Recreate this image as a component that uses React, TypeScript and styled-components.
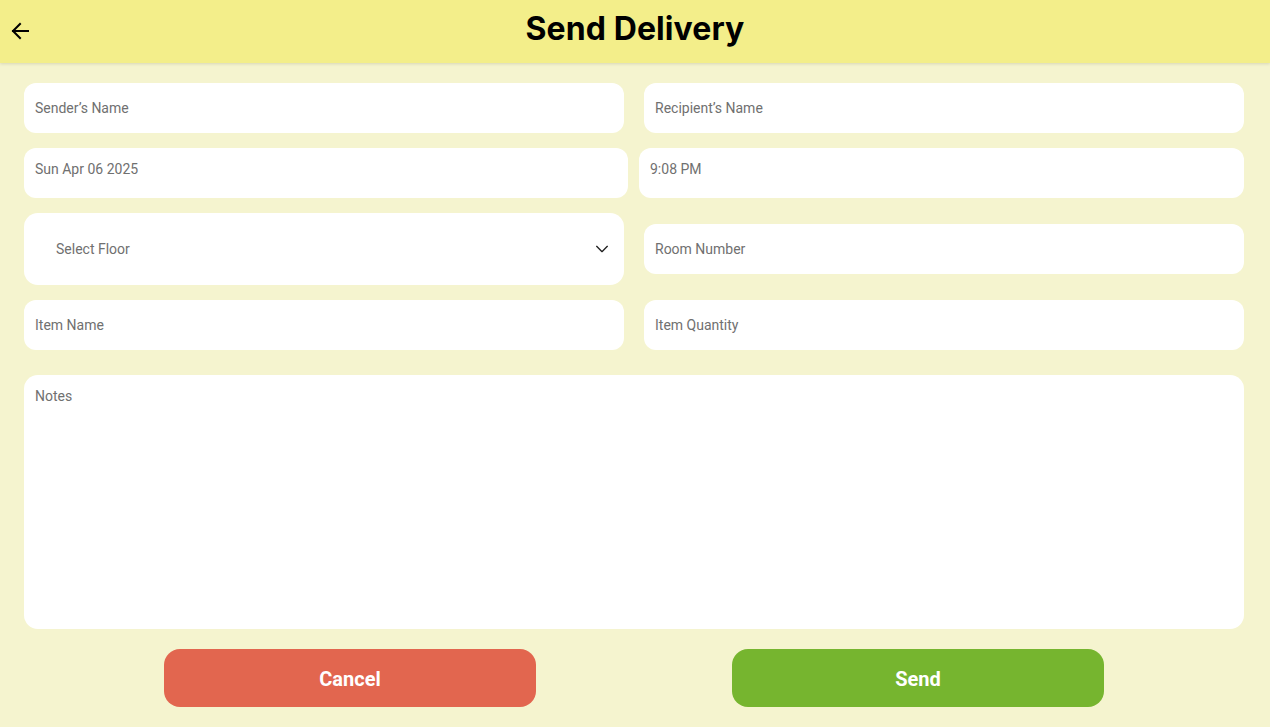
import React from "react";
import styled, { createGlobalStyle } from "styled-components";

const Global = createGlobalStyle`
  html, body { margin: 0; padding: 0; }
  body {
    background: #f5f4cf;
    font-family: Roboto, "Liberation Sans", sans-serif;
  }
  * { box-sizing: border-box; }
`;

const Page = styled.div`
  width: 1270px;
  height: 727px;
  background: #f5f4cf;
  display: flex;
  flex-direction: column;
  overflow: hidden;
`;

const Header = styled.header`
  height: 63px;
  background: #f3ee8a;
  box-shadow: 0 1px 3px rgba(0, 0, 0, 0.12);
  display: flex;
  align-items: center;
  justify-content: center;
  position: relative;
  flex-shrink: 0;
  z-index: 1;
`;

const BackButton = styled.button`
  position: absolute;
  left: 8px;
  top: 19px;
  width: 24px;
  height: 24px;
  padding: 0;
  border: none;
  background: transparent;
  display: flex;
  align-items: center;
  justify-content: center;
  color: #000;
`;

const Title = styled.h1`
  margin: 0;
  font-family: Inter, "Open Sans", sans-serif;
  font-weight: 700;
  font-size: 32px;
  color: #000;
  letter-spacing: 0.1px;
  transform: translateY(-3px);
`;

const Form = styled.main`
  flex: 1;
  padding: 20px 26px 20px 24px;
  display: flex;
  flex-direction: column;
`;

const Row = styled.div<{ $cols: string; $gap: number; $mb: number }>`
  display: grid;
  grid-template-columns: ${(p) => p.$cols};
  align-items: center;
  column-gap: ${(p) => p.$gap}px;
  margin-bottom: ${(p) => p.$mb}px;
`;

const TextInput = styled.input`
  width: 100%;
  min-width: 0;
  height: 50px;
  border: none;
  outline: none;
  border-radius: 12px;
  background: #fff;
  padding: 0 11px;
  font-family: Roboto, "Liberation Sans", sans-serif;
  font-size: 14px;
  color: #707070;
  &::placeholder { color: #707070; }
`;

const PickerField = styled.div`
  min-width: 0;
  height: 50px;
  border-radius: 12px;
  background: #fff;
  padding: 13px 11px 0;
  font-size: 14px;
  line-height: 16px;
  color: #707070;
`;

const SelectBox = styled.div`
  min-width: 0;
  height: 72px;
  border-radius: 14px;
  background: #fff;
  padding: 0 14px 0 32px;
  display: flex;
  align-items: center;
  justify-content: space-between;
  font-size: 14px;
  color: #707070;
`;

const Notes = styled.textarea`
  height: 254px;
  width: 100%;
  resize: none;
  border: none;
  outline: none;
  border-radius: 14px;
  background: #fff;
  padding: 13px 11px;
  font-family: Roboto, "Liberation Sans", sans-serif;
  font-size: 14px;
  line-height: 16px;
  color: #707070;
  margin: 0 0 20px;
  display: block;
  &::placeholder { color: #707070; }
`;

const Actions = styled.div`
  display: flex;
  justify-content: center;
  gap: 196px;
`;

const ActionButton = styled.button<{ $bg: string }>`
  width: 372px;
  height: 58px;
  border: none;
  border-radius: 16px;
  background: ${(p) => p.$bg};
  color: #fff;
  font-family: Roboto, "Liberation Sans", sans-serif;
  font-weight: 700;
  font-size: 20px;
  padding: 2px 0 0;
`;

export default function App() {
  return (
    <>
      <Global />
      <Page>
        <Header>
          <BackButton aria-label="Back">
            <svg width="24" height="24" viewBox="0 0 24 24" fill="none" stroke="#000" strokeWidth="2" strokeLinecap="square" strokeLinejoin="miter">
              <path d="M20 12H5" />
              <path d="M12 5l-7 7 7 7" />
            </svg>
          </BackButton>
          <Title>Send Delivery</Title>
        </Header>
        <Form>
          <Row $cols="1fr 1fr" $gap={20} $mb={15}>
            <TextInput placeholder="Sender’s Name" />
            <TextInput placeholder="Recipient’s Name" />
          </Row>
          <Row $cols="604fr 605fr" $gap={11} $mb={15}>
            <PickerField>Sun Apr 06 2025</PickerField>
            <PickerField>9:08 PM</PickerField>
          </Row>
          <Row $cols="1fr 1fr" $gap={20} $mb={15}>
            <SelectBox>
              <span>Select Floor</span>
              <svg width="16" height="16" viewBox="0 0 24 24" fill="none" stroke="#222" strokeWidth="2" strokeLinecap="round" strokeLinejoin="round">
                <path d="M4 8l8 8 8-8" />
              </svg>
            </SelectBox>
            <TextInput placeholder="Room Number" />
          </Row>
          <Row $cols="1fr 1fr" $gap={20} $mb={25}>
            <TextInput placeholder="Item Name" />
            <TextInput placeholder="Item Quantity" />
          </Row>
          <Notes placeholder="Notes" />
          <Actions>
            <ActionButton $bg="#e2664f">Cancel</ActionButton>
            <ActionButton $bg="#76b52f">Send</ActionButton>
          </Actions>
        </Form>
      </Page>
    </>
  );
}
